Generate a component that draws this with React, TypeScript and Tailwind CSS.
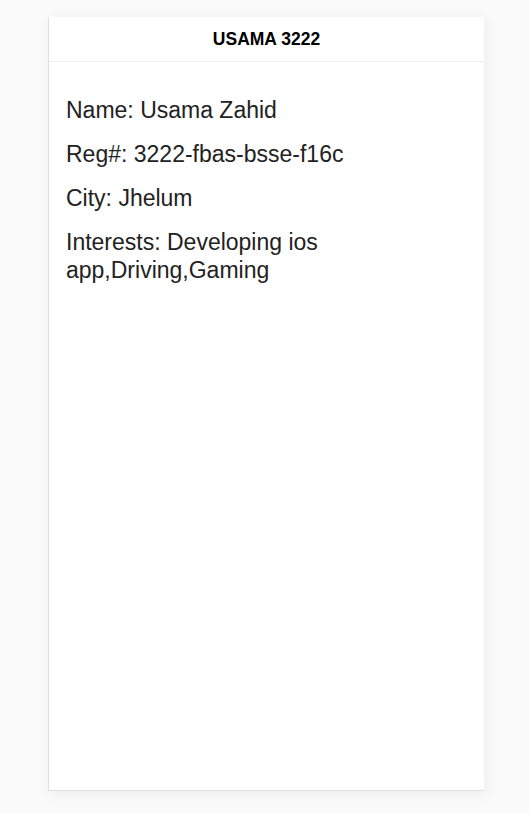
export default function App() {
  const rows = [
    "Name: Usama Zahid",
    "Reg#: 3222-fbas-bsse-f16c",
    "City: Jhelum",
    "Interests: Developing ios app,Driving,Gaming",
  ]

  return (
    <div className="min-h-screen bg-[#fafafa] flex pl-[48px] pt-[17px] font-['Liberation_Sans',Arial,sans-serif]">
      <div className="w-[436px] h-[774px] bg-white shadow-[2px_2px_14px_rgba(0,0,0,0.06)] border-l border-b border-[#e0e0e0] flex flex-col">
        <div className="h-[45px] border-b border-[#eeeeee] flex items-center justify-center">
          <h1 className="text-[17.5px] font-bold text-black">USAMA 3222</h1>
        </div>
        <div className="pl-[17px] pt-[34px] flex flex-col gap-[16px] text-[#222]">
          {rows.map((r) => (
            <p key={r} className="text-[23px] leading-[28px] max-w-[300px]">
              {r}
            </p>
          ))}
        </div>
      </div>
    </div>
  )
}
